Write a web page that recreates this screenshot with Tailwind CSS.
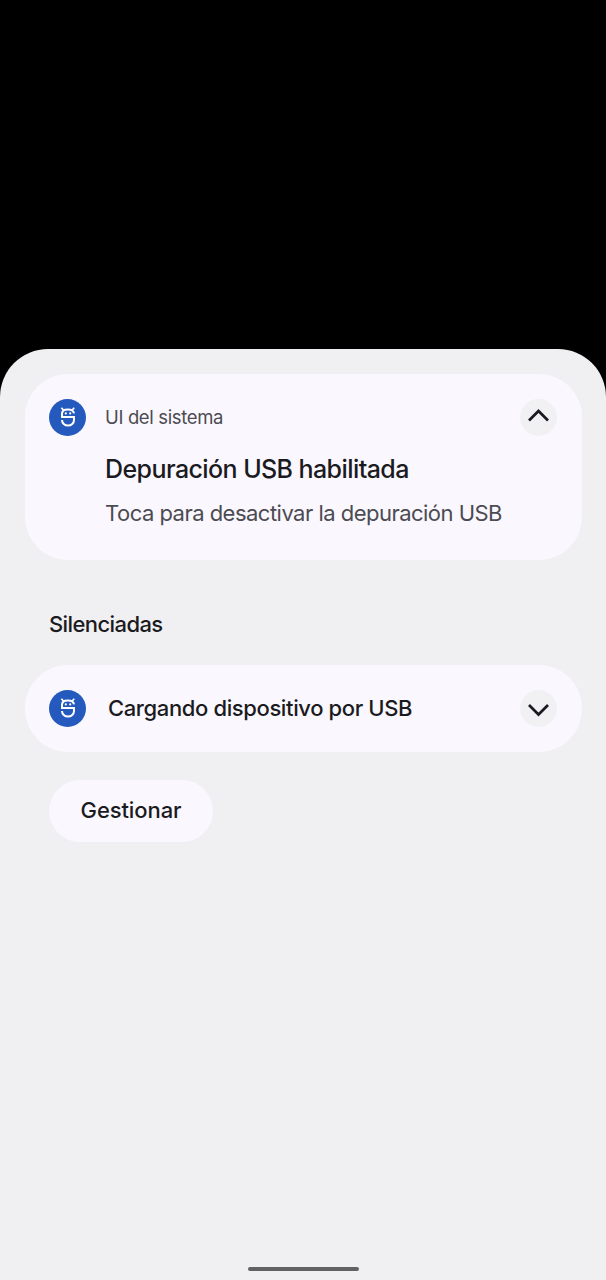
<!DOCTYPE html>
<html lang="es">
<head>
<meta charset="utf-8">
<title>Notificaciones</title>
<script src="https://cdn.jsdelivr.net/npm/@tailwindcss/browser@4"></script>
</head>
<body class="bg-black font-['Inter',sans-serif] text-[#1b1b1f]">
<svg class="hidden">
  <symbol id="bot" viewBox="0 0 37 37">
    <circle cx="18.5" cy="18.5" r="18.5" fill="#2459bd"/>
    <g fill="none" stroke="#fff" stroke-width="2">
      <path d="M25 14.4C24.6 11.4 22 10.4 18.8 10.4S13 11.6 13 14.8V18H25V21A6 5.6 0 0 1 13 21"/>
      <path d="M14.8 11.5L12.4 8.7M22.8 11.5L25.2 8.7" stroke-width="1.7"/>
    </g>
    <g fill="#fff"><circle cx="16.8" cy="14.4" r="1.1"/><circle cx="21.2" cy="14.4" r="1.1"/></g>
  </symbol>
</svg>
<main class="flex h-[1280px] w-[606px] flex-col pt-[349px]">
  <section class="flex flex-1 flex-col items-start rounded-t-[48px] bg-[#f0f0f3] px-[25px] pt-[25px]">
    <article class="flex h-[186px] w-[557px] rounded-[43px] bg-[#faf8fe] pt-[25px] pr-[25px] pl-6">
      <svg class="size-[37px] shrink-0"><use href="#bot"/></svg>
      <div class="ml-[19px] min-w-0 flex-1 whitespace-nowrap">
        <p class="h-[37px] text-[18.5px] leading-[36px] tracking-[-0.35px] text-[#4c4b52]">UI del sistema</p>
        <h1 class="mt-[15px] h-[36px] text-[25px] leading-[36px] font-medium tracking-[-0.58px]">Depuración USB habilitada</h1>
        <p class="mt-2 h-[34px] text-[22px] leading-[36px] tracking-[-0.52px] text-[#4c4b52]">Toca para desactivar la depuración USB</p>
      </div>
      <button class="flex size-[37px] shrink-0 items-center justify-center rounded-full bg-[#f1f1f3]">
        <svg class="size-[37px]" viewBox="0 0 37 37" fill="none" stroke="#1b1b1f" stroke-width="2.7"><path d="M9 21.5L18.5 12L28 21.5"/></svg>
      </button>
    </article>
    <h2 class="mt-[46px] ml-6 h-9 text-[22px] leading-9 font-medium tracking-[-0.6px] whitespace-nowrap">Silenciadas</h2>
    <article class="mt-[23px] flex h-[86.5px] w-[557px] items-center rounded-[43px] bg-[#faf8fe] pr-[25px] pl-6">
      <svg class="size-[37px] shrink-0"><use href="#bot"/></svg>
      <p class="ml-[22px] min-w-0 flex-1 text-[22px] leading-9 font-medium tracking-[-0.38px] whitespace-nowrap">Cargando dispositivo por USB</p>
      <button class="flex size-[37px] shrink-0 items-center justify-center rounded-full bg-[#f1f1f3]">
        <svg class="size-[37px]" viewBox="0 0 37 37" fill="none" stroke="#1b1b1f" stroke-width="2.7"><path d="M9 15L18.5 24.5L28 15"/></svg>
      </button>
    </article>
    <button class="mt-[28.5px] ml-6 h-[61.5px] w-[164px] rounded-full bg-[#faf8fe] text-[22px] font-medium tracking-[-0.1px] whitespace-nowrap">Gestionar</button>
    <div class="mt-auto mb-[9px] h-[4px] w-[111px] self-center rounded-full bg-[#626265]"></div>
  </section>
</main>
</body>
</html>
